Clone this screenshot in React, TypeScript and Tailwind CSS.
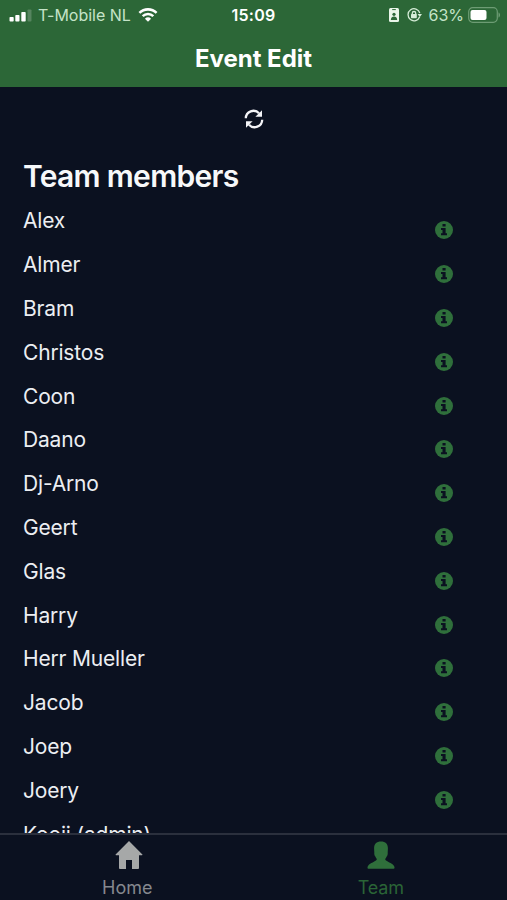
const members = [
  'Alex', 'Almer', 'Bram', 'Christos', 'Coon', 'Daano', 'Dj-Arno', 'Geert',
  'Glas', 'Harry', 'Herr Mueller', 'Jacob', 'Joep', 'Joery', 'Kooij (admin)',
];

function StatusBar() {
  return (
    <div className="grid h-[30px] grid-cols-3 items-center px-[9px] text-[16px] leading-none">
      <div className="flex items-center text-[#c5e3c8]">
        <svg className="mr-[6px] shrink-0" width="23" height="13" viewBox="0 0 23 13" fill="#fff">
          <rect x="0.5" y="8" width="4.2" height="4.5" rx="0.8" />
          <rect x="6.3" y="6" width="4.2" height="6.5" rx="0.8" />
          <rect x="12.3" y="3" width="4.4" height="9.5" rx="0.8" />
          <rect x="18.5" y="0.5" width="4" height="12" rx="0.8" opacity="0.2" />
        </svg>
        <span className="whitespace-nowrap text-[16px] tracking-[-0.03px]">T-Mobile NL</span>
        <svg className="ml-[7px] shrink-0" width="20" height="14" viewBox="0 0 21 15" fill="none" stroke="#fff" strokeWidth="2.7">
          <path d="M1.3 5.2a13.2 13.2 0 0 1 18.4 0" />
          <path d="M4.8 8.8a8.2 8.2 0 0 1 11.4 0" />
          <path d="M10.5 14.6 7.2 11.4a4.8 4.8 0 0 1 6.6 0z" fill="#fff" stroke="none" />
        </svg>
      </div>
      <div className="text-center font-semibold tracking-[0.3px] text-white">15:09</div>
      <div className="-mr-[2px] flex items-center justify-end text-[#c5e3c8]">
        <svg className="mr-[8px] shrink-0" width="10" height="14" viewBox="0 0 10 14">
          <rect width="10" height="14" rx="1.5" fill="#e9f5e9" />
          <path d="M3.2 1.6h3.6" stroke="#2c6737" strokeWidth="1" />
          <circle cx="5" cy="6.3" r="1.6" fill="#2c6737" />
          <path d="M1.8 12c0-4.6 6.4-4.6 6.4 0z" fill="#2c6737" />
        </svg>
        <svg className="mr-[6px] shrink-0" width="15" height="14" viewBox="0 0 15 14" fill="none" stroke="#d5ecd7" strokeWidth="1.3">
          <path d="M12.7 8.8A6 6 0 1 1 12.8 5" />
          <path d="M10.6 6.100h4.400l-2.200 2.800z" fill="#d5ecd7" stroke="none" />
          <rect x="4" y="6" width="5.800" height="4.200" rx="0.6" fill="#d5ecd7" stroke="none" />
          <path d="M5.300 6.500V5.200a1.700 1.700 0 0 1 3.400 0v1.300" />
        </svg>
        <span>63%</span>
        <svg className="ml-[4px] shrink-0" width="32" height="16" viewBox="0 0 32 16">
          <rect x="0.7" y="0.7" width="28.600" height="14.600" rx="4" fill="none" stroke="#6d9c74" strokeWidth="1.200" />
          <rect x="2.500" y="3" width="16" height="10" rx="2" fill="#fff" />
          <path d="M30.500 5.500c2 .6 2 4.400 0 5z" fill="#6d9c74" />
        </svg>
      </div>
    </div>
  );
}

function RefreshIcon() {
  return (
    <svg width="20" height="20" viewBox="0 0 20 20" fill="none" stroke="#f4f4f7" strokeWidth="2.3">
      <path d="M1.800 9.300A7.600 7.600 0 0 1 15 4.300" />
      <path d="M18.200 10.700A7.600 7.600 0 0 1 5 15.700" />
      <path d="M18 1.200v6.600h-6.600z" fill="#f4f4f7" stroke="none" />
      <path d="M2 18.800v-6.600h6.600z" fill="#f4f4f7" stroke="none" />
    </svg>
  );
}

function InfoIcon() {
  return (
    <svg className="mt-[22px] shrink-0" width="18" height="18" viewBox="0 0 18 18">
      <circle cx="9" cy="9" r="9" fill="#2f6f3b" />
      <path d="M7.500 2.900h3.100v2.700H7.500zM6 7h4.600v5.200H12v2H6v-2h1.500V9H6z" fill="#0b1120" />
    </svg>
  );
}

function HomeIcon() {
  return (
    <svg width="28" height="28" viewBox="0 0 28 28" fill="currentColor">
      <path d="M14 0 27.4 13.4q.4.8-.5.8H24v12.9q0 .9-.9.9H17v-9h-6v9H4.9q-.9 0-.9-.9V14.2H1.1q-.9 0-.5-.8z" />
    </svg>
  );
}

function PersonIcon() {
  return (
    <svg width="28" height="28" viewBox="0 0 28 28" fill="currentColor">
      <path d="M14 .5c4.500 0 7 2.600 6.900 7l-.2 4c.2 2-.3 3.300-1.200 4.200-.3.900-.7 1.500-1.200 2v1.100c1.500 1.800 6.500 3.300 8.400 5.700.7.900.9 1.600.8 2.400 0 .5-.3.8-.9.800H1.400c-.6 0-.9-.3-.9-.8-.1-.8.1-1.500.8-2.400 1.900-2.400 6.900-3.900 8.400-5.700v-1.100c-.5-.5-.9-1.100-1.200-2-.9-.9-1.400-2.200-1.200-4.200l-.2-4C7 3.100 9.500.5 14 .5z" />
    </svg>
  );
}

export default function App() {
  return (
    <div className="flex h-[900px] w-full flex-col overflow-hidden bg-[#0b1120] font-['Inter',sans-serif]">
      <header className="h-[87px] shrink-0 bg-[#2c6737]">
        <StatusBar />
        <h1 className="mt-[13px] text-center text-[24px] leading-[31px] font-bold text-white">Event Edit</h1>
      </header>

      <main className="flex min-h-0 flex-1 flex-col overflow-hidden px-[23px] text-[#eceef2]">
        <div className="mt-[22px] flex shrink-0 justify-center">
          <RefreshIcon />
        </div>
        <h2 className="mt-[27px] h-[43.4px] shrink-0 text-[30px] leading-[40px] font-semibold tracking-[-0.7px] text-[#f7f8fa]">Team members</h2>
        <ul>
          {members.map((name) => (
            <li key={name} className="flex h-[43.8px] justify-between pr-[31px]">
              <span className="text-[21px] leading-[44px] tracking-[-0.18px]">{name}</span>
              <InfoIcon />
            </li>
          ))}
        </ul>
      </main>

      <nav className="grid h-[67px] shrink-0 grid-cols-2 border-t-2 border-[#2b303d] bg-[#0b1120] text-[18px] leading-[22px]">
        <div className="flex flex-col items-center pt-[6px] text-[#85888e]">
          <span className="ml-[4px] text-[#a6a8a8]"><HomeIcon /></span>
          <span className="mt-[8px] ml-[1px]">Home</span>
        </div>
        <div className="flex flex-col items-center pt-[6px] text-[#2a6436]">
          <span className="ml-[1px] text-[#2f6f3b]"><PersonIcon /></span>
          <span className="mt-[8px] ml-[1px] tracking-[-0.2px]">Team</span>
        </div>
      </nav>
    </div>
  );
}
